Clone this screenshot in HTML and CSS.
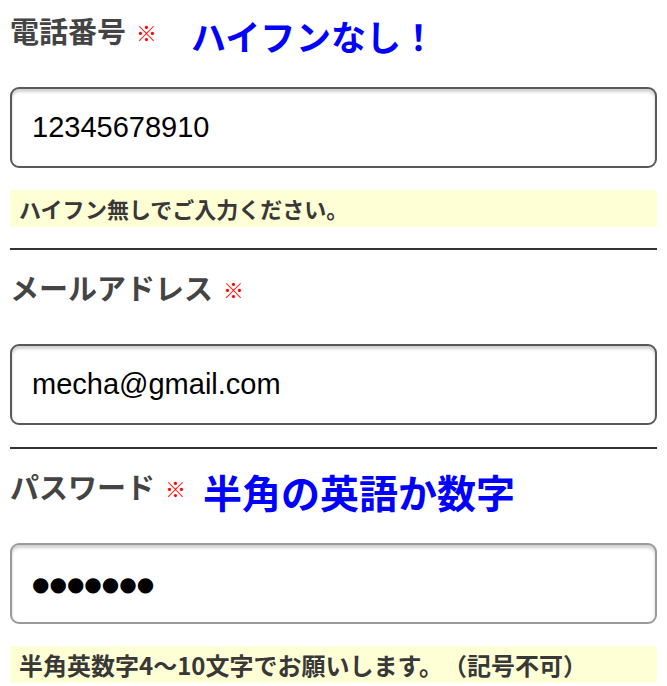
FILE: index.html
```html
<!DOCTYPE html>
<html lang="ja">
<head>
<meta charset="utf-8">
<link rel="stylesheet" href="styles.css">
</head>
<body>
<form class="form">
  <div class="section">
    <div class="head">
      <span class="label">電話番号</span>
      <span class="req">※</span>
      <span class="note note-phone">ハイフンなし！</span>
    </div>
    <input class="field" type="text" value="12345678910" readonly>
    <p class="hint">ハイフン無しでご入力ください。</p>
  </div>
  <hr class="rule">
  <div class="section">
    <div class="head">
      <span class="label">メールアドレス</span>
      <span class="req">※</span>
    </div>
    <input class="field" type="text" value="mecha@gmail.com" readonly>
  </div>
  <hr class="rule rule-tight">
  <div class="section">
    <div class="head">
      <span class="label">パスワード</span>
      <span class="req">※</span>
      <span class="note note-pass">半角の英語か数字</span>
    </div>
    <input class="field field-light dots" type="text" value="●●●●●●●" readonly>
    <p class="hint hint-lg">半角英数字4〜10文字でお願いします。（記号不可）</p>
  </div>
</form>
</body>
</html>
```
FILE: styles.css
```css
html, body {
  margin: 0;
  padding: 0;
  background: #ffffff;
}
body {
  padding: 0 10px;
  font-family: "Noto Sans CJK JP", "Liberation Sans", sans-serif;
  color: #444;
  text-spacing-trim: space-all;
}
.form {
  display: flex;
  flex-direction: column;
}
.section {
  display: flex;
  flex-direction: column;
}
.head {
  display: flex;
  align-items: flex-start;
  height: 87px;
  box-sizing: border-box;
  padding-top: 16px;
}
.label {
  font-size: 29px;
  line-height: 1;
  font-weight: bold;
  color: #444;
}
.req {
  font-size: 21px;
  line-height: 1;
  color: #ff0000;
  margin-left: 10px;
  margin-top: 6px;
}
.note {
  line-height: 1;
  font-weight: bold;
  color: #0000ff;
}
.note-phone {
  font-size: 35px;
  margin-left: 34px;
  margin-top: 2px;
}
.note-pass {
  font-size: 39px;
  margin-left: 17px;
  margin-top: 0;
}
.field {
  display: block;
  width: 100%;
  height: 81px;
  box-sizing: border-box;
  margin: 0;
  padding: 0 0 0 20px;
  border: 2px solid #595959;
  border-radius: 9px;
  box-shadow: inset 0 3px 3px rgba(0, 0, 0, 0.18);
  background: #fff;
  font-family: "Liberation Sans", Arial, sans-serif;
  font-size: 29px;
  color: #000;
  outline: none;
}
.field-light {
  border-color: #9a9a9a;
}
.dots {
  font-family: "DejaVu Sans", sans-serif;
  font-size: 20px;
  letter-spacing: 0;
}
.hint {
  margin: 22px 0 0;
  height: 37px;
  box-sizing: border-box;
  padding: 0 0 0 9px;
  background: #ffffd6;
  font-size: 22px;
  font-weight: bold;
  line-height: 37px;
  color: #383838;
  white-space: nowrap;
}
.hint-lg {
  font-size: 24px;
}
.rule {
  margin: 21px 0 7px;
  border: 0;
  height: 2px;
  background: #333;
}
.rule-tight {
  margin-top: 22px;
}
```
